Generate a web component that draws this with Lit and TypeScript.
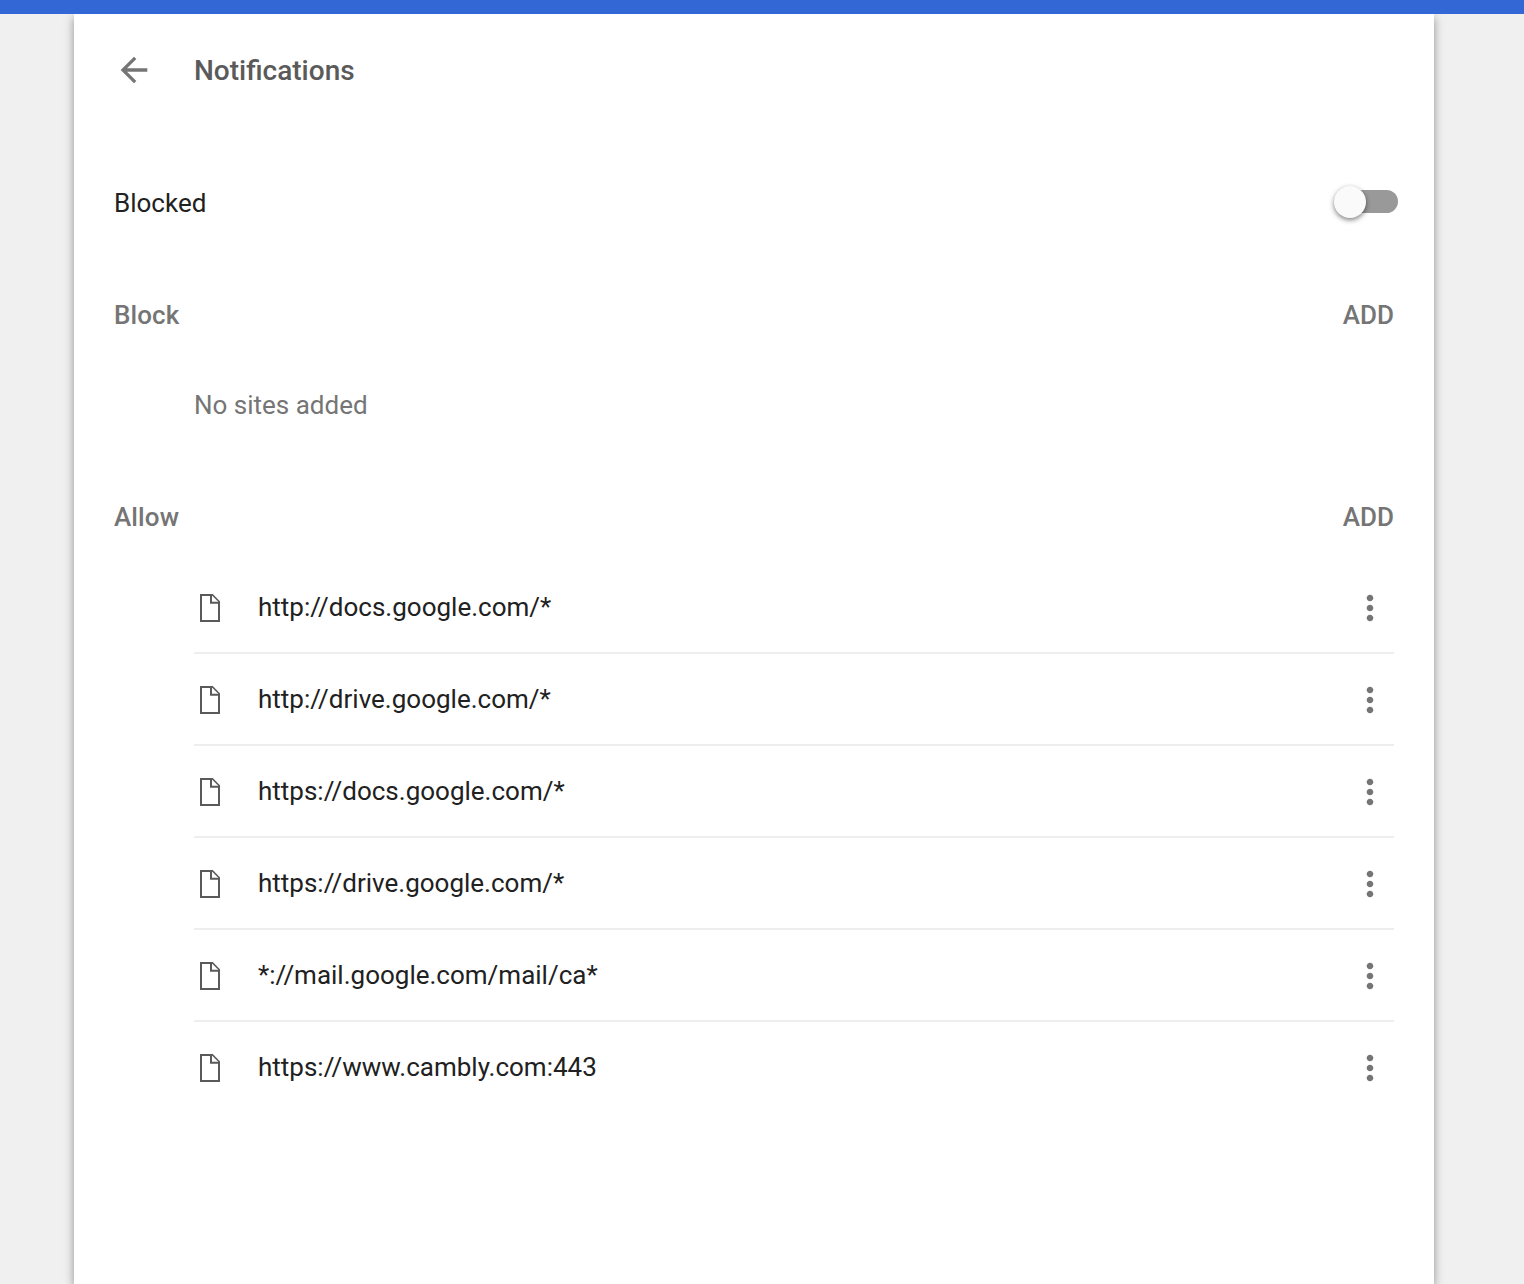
import { LitElement, html, css, svg } from "lit";
import { customElement, property } from "lit/decorators.js";

const backIcon = svg`<path d="M20 11H7.83l5.59-5.59L12 4l-8 8 8 8 1.41-1.41L7.83 13H20v-2z"></path>`;
const moreIcon = svg`<path d="M12 8c1.1 0 2-.9 2-2s-.9-2-2-2-2 .9-2 2 .9 2 2 2zm0 2c-1.1 0-2 .9-2 2s.9 2 2 2 2-.9 2-2-.9-2-2-2zm0 6c-1.1 0-2 .9-2 2s.9 2 2 2 2-.9 2-2-.9-2-2-2z"></path>`;

@customElement("site-row")
export class SiteRow extends LitElement {
  @property() pattern = "";

  static styles = css`
    :host {
      display: flex;
      align-items: center;
      box-sizing: border-box;
      height: 92px;
      padding: 2px 4px 0 0;
      border-top: 2px solid #eeeeee;
    }
    :host(:first-of-type) {
      border-top-color: transparent;
    }
    .file {
      width: 32px;
      height: 32px;
      margin-right: 32px;
      flex: none;
    }
    .pattern {
      flex: 1;
      color: #212121;
      line-height: 40px;
      margin-top: -2px;
    }
    .more {
      width: 40px;
      height: 40px;
      fill: #757575;
      flex: none;
    }
  `;

  render() {
    return html`
      <svg class="file" viewBox="0 0 32 32" fill="none" stroke="#5a5a5a" stroke-width="2">
        <path d="M18.6 3H7V29H25V9.4"></path>
        <path d="M17 3V10.7H25"></path>
        <path d="M18 2.4L25.6 10" stroke-width="1.5"></path>
      </svg>
      <span class="pattern">${this.pattern}</span>
      <svg class="more" viewBox="0 0 24 24">${moreIcon}</svg>
    `;
  }
}

@customElement("app-root")
export class AppRoot extends LitElement {
  private allowed = [
    "http://docs.google.com/*",
    "http://drive.google.com/*",
    "https://docs.google.com/*",
    "https://drive.google.com/*",
    "*://mail.google.com/mail/ca*",
    "https://www.cambly.com:443",
  ];

  static styles = css`
    :host {
      display: flex;
      flex-direction: column;
      height: 1284px;
      overflow: hidden;
      background: #f0f0f0;
      font-family: Roboto, "Liberation Sans", sans-serif;
      font-size: 26px;
      color: #757575;
    }
    .toolbar {
      height: 14px;
      flex: none;
      background: #3367d6;
      position: relative;
      z-index: 1;
    }
    .card {
      flex: 1;
      box-sizing: border-box;
      width: 1360px;
      margin-left: 74px;
      padding: 0 40px;
      background: #fff;
      box-shadow: 0 4px 8px rgba(0, 0, 0, 0.32), 0 2px 14px rgba(0, 0, 0, 0.1);
    }
    .header {
      display: flex;
      align-items: center;
      height: 112px;
      gap: 40px;
    }
    .back {
      width: 40px;
      height: 40px;
      fill: #757575;
    }
    .title {
      margin: 0;
      font-size: 28px;
      font-weight: 500;
      color: #5a5a5a;
    }
    .setting {
      display: flex;
      align-items: center;
      justify-content: space-between;
      height: 80px;
      margin-top: 36px;
      color: #212121;
    }
    .setting-label {
      padding-top: 2px;
    }
    .toggle {
      display: flex;
      align-items: center;
      width: 64px;
      height: 32px;
      margin-right: -4px;
    }
    .knob {
      width: 32px;
      height: 32px;
      border-radius: 50%;
      background: #fafafa;
      box-shadow: 0 2px 5px rgba(0, 0, 0, 0.5);
      z-index: 1;
    }
    .track {
      width: 48px;
      height: 23px;
      margin-left: -16px;
      margin-bottom: 1px;
      border-radius: 12px;
      background: #999;
    }
    .section {
      display: flex;
      align-items: center;
      justify-content: space-between;
      height: 90px;
    }
    .block {
      margin-top: 28px;
    }
    .allow {
      margin-top: 22px;
    }
    .label {
      margin: 0;
      font-size: 26px;
      font-weight: 500;
      letter-spacing: 0.1px;
    }
    .add {
      padding: 0;
      border: 0;
      background: none;
      font: 500 26px Roboto, "Liberation Sans", sans-serif;
      color: #757575;
    }
    .empty {
      display: flex;
      align-items: center;
      height: 90px;
      padding-left: 80px;
    }
    .sites {
      padding-left: 80px;
      margin-top: -2px;
    }
  `;

  render() {
    return html`
      <div class="toolbar"></div>
      <main class="card">
        <header class="header">
          <svg class="back" viewBox="0 0 24 24">${backIcon}</svg>
          <h1 class="title">Notifications</h1>
        </header>
        <div class="setting">
          <span class="setting-label">Blocked</span>
          <div class="toggle"><div class="knob"></div><div class="track"></div></div>
        </div>
        <div class="section block">
          <h2 class="label">Block</h2>
          <button class="add">ADD</button>
        </div>
        <div class="empty">No sites added</div>
        <div class="section allow">
          <h2 class="label">Allow</h2>
          <button class="add">ADD</button>
        </div>
        <div class="sites">
          ${this.allowed.map((p) => html`<site-row .pattern=${p}></site-row>`)}
        </div>
      </main>
    `;
  }
}
